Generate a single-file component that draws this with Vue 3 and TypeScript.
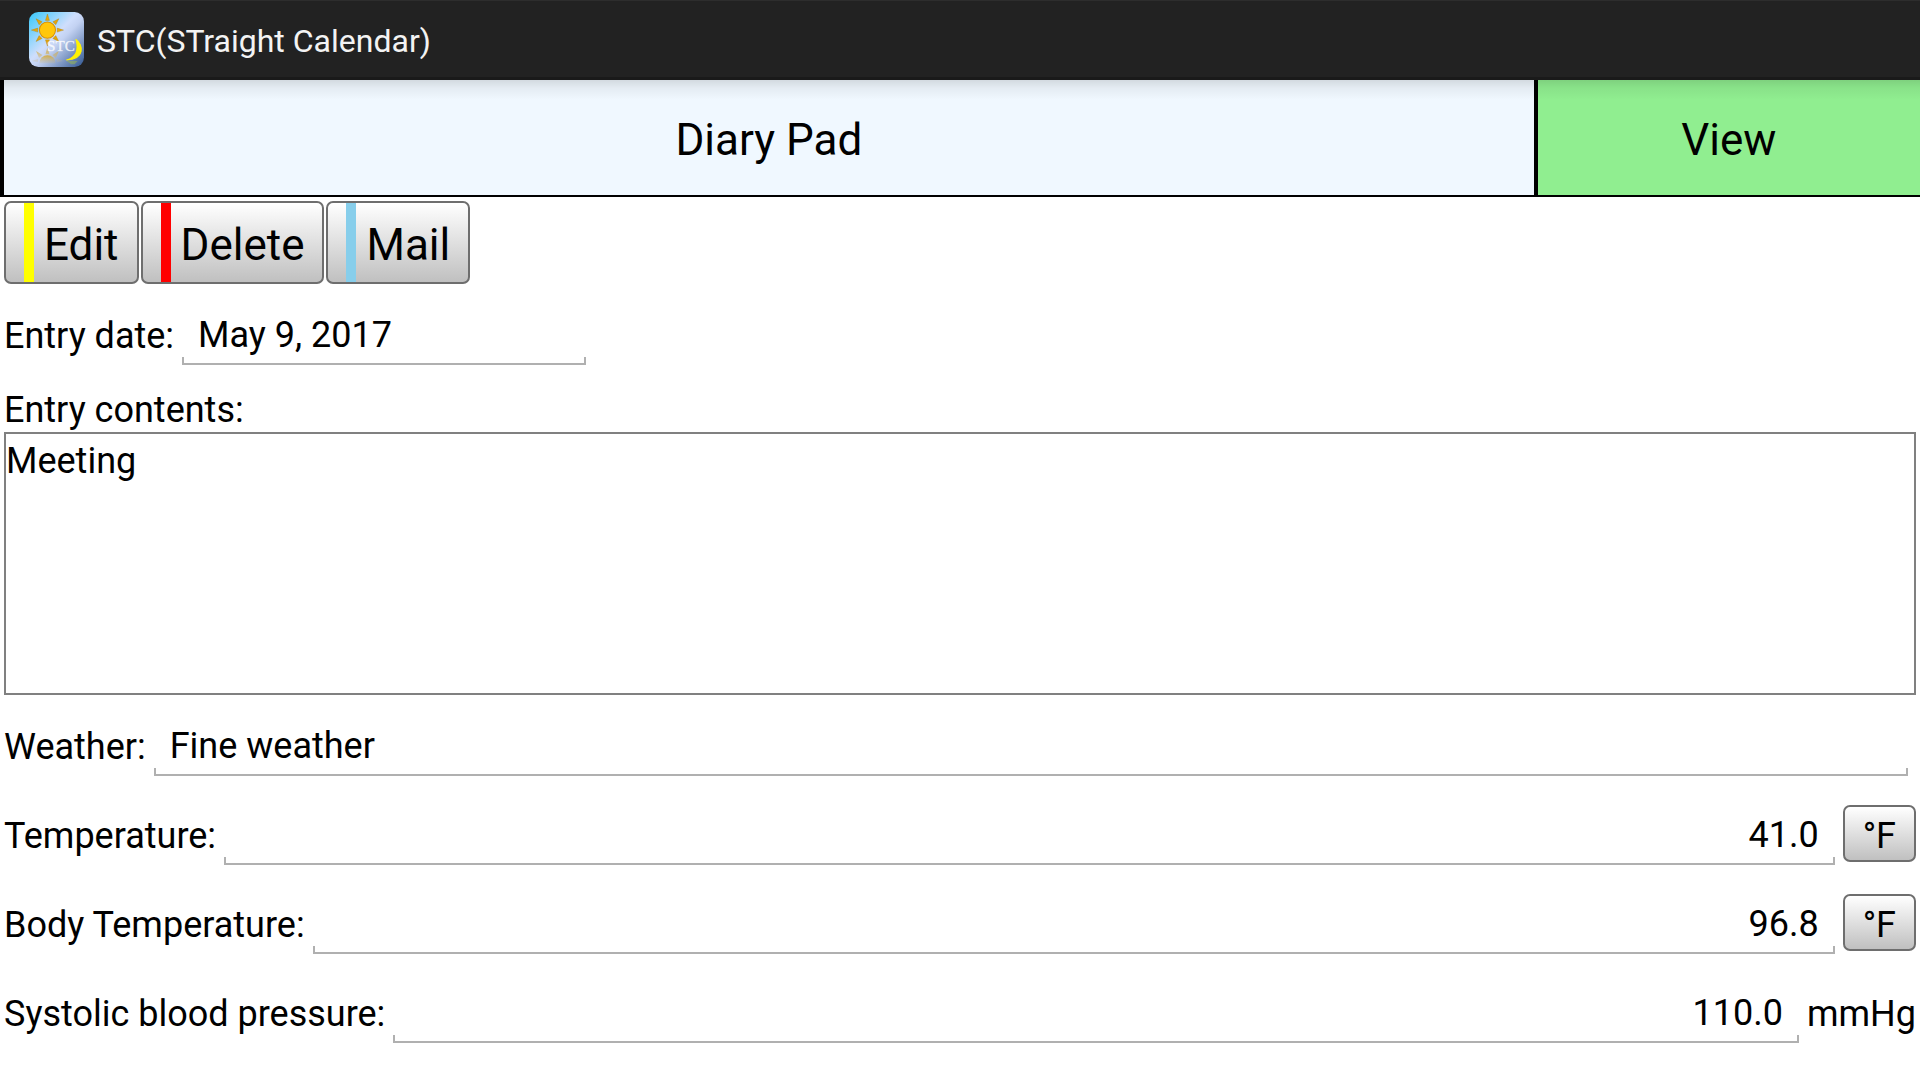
<script setup lang="ts">
import { ref } from 'vue'

interface Action {
  label: string
  color: string
}

interface Reading {
  id: string
  label: string
  value: string
  unit: string
  switchable: boolean
}

const actions: Action[] = [
  { label: 'Edit', color: '#ffff00' },
  { label: 'Delete', color: '#ff0000' },
  { label: 'Mail', color: '#87ceeb' },
]

const entryDate = ref('May 9, 2017')
const contents = ref('Meeting')
const weather = ref('Fine weather')

const readings = ref<Reading[]>([
  { id: 'temperature', label: 'Temperature:', value: '41.0', unit: '°F', switchable: true },
  { id: 'body-temperature', label: 'Body Temperature:', value: '96.8', unit: '°F', switchable: true },
  { id: 'systolic', label: 'Systolic blood pressure:', value: '110.0', unit: 'mmHg', switchable: false },
])

const rayAngles = [0, 45, 90, 135, 180, 225, 270, 315]
</script>

<template>
  <div class="app">
    <header class="app-bar">
      <svg class="app-icon" viewBox="0 0 164 164" aria-hidden="true">
        <defs>
          <linearGradient id="sky" x1="0" y1="0" x2="1" y2="1">
            <stop offset="0" stop-color="#35c8fb" />
            <stop offset="0.45" stop-color="#cfdefc" />
            <stop offset="0.55" stop-color="#c3d2f2" />
            <stop offset="1" stop-color="#2f5590" />
          </linearGradient>
          <linearGradient id="fade" x1="0" y1="0" x2="0" y2="1">
            <stop offset="0" stop-color="#d9a520" stop-opacity="0.85" />
            <stop offset="1" stop-color="#c9b98a" stop-opacity="0.2" />
          </linearGradient>
          <clipPath id="tile"><rect width="164" height="164" rx="28" /></clipPath>
        </defs>
        <g clip-path="url(#tile)">
          <rect width="164" height="164" fill="url(#sky)" />
          <g fill="url(#fade)">
            <path d="M55 106 L61 126 H49Z M21 116 L40 128 L30 137Z M89 116 L70 128 L80 137Z M8 146 L27 140 V150Z M102 146 L83 140 V150Z" />
            <path d="M31 153 A24 24 0 0 1 79 153Z" />
          </g>
          <g fill="#e3a60c" stroke="#a87808" stroke-width="1">
            <path v-for="a in rayAngles" :key="a" d="M55 6 L61 25 H49Z" :transform="`rotate(${a} 55 54)`" />
          </g>
          <circle cx="55" cy="54" r="24" fill="#ffc70a" stroke="#d98e00" stroke-width="3" />
          <text x="54" y="116" class="icon-text">STC</text>
          <path d="M140 82 C164 98 166 142 112 143 C142 134 148 110 140 82Z" fill="#fff200" stroke="#fff200" stroke-width="3" stroke-linejoin="round" />
          <path d="M112 146 H145 L136 156 H126Z" fill="#8fae5e" opacity="0.65" />
        </g>
      </svg>
      <span class="app-title">STC(STraight Calendar)</span>
    </header>

    <div class="title-row">
      <h1 class="page-title">Diary Pad</h1>
      <button type="button" class="mode">View</button>
    </div>

    <main class="page">
      <div class="actions">
        <button v-for="a in actions" :key="a.label" type="button" class="btn action">
          <span class="stripe" :style="{ backgroundColor: a.color }"></span>
          <span class="action-label">{{ a.label }}</span>
        </button>
      </div>

      <form class="entry" @submit.prevent>
        <div class="row">
          <label for="entry-date" class="label">Entry date:</label>
          <input id="entry-date" v-model="entryDate" type="text" class="field date" />
        </div>

        <div class="contents">
          <label for="contents" class="contents-label">Entry contents:</label>
          <textarea id="contents" v-model="contents" class="memo" spellcheck="false"></textarea>
        </div>

        <div class="row weather">
          <label for="weather" class="label">Weather:</label>
          <input id="weather" v-model="weather" type="text" class="field" />
        </div>

        <div v-for="r in readings" :key="r.id" class="row">
          <label :for="r.id" class="label">{{ r.label }}</label>
          <input :id="r.id" v-model="r.value" type="text" inputmode="decimal" class="field number" />
          <button v-if="r.switchable" type="button" class="btn unit-btn">{{ r.unit }}</button>
          <span v-else class="label">{{ r.unit }}</span>
        </div>
      </form>
    </main>
  </div>
</template>

<style>
body {
  background: #fff;
}
</style>

<style scoped>
.app,
.app * {
  box-sizing: border-box;
}

.app {
  font-family: Roboto, 'Liberation Sans', sans-serif;
  font-size: 36px;
  line-height: 42px;
  color: #000;
}

button,
input,
textarea {
  margin: 0;
  font: inherit;
  color: inherit;
}

.app-bar {
  display: flex;
  align-items: center;
  gap: 13px;
  height: 80px;
  padding: 0 29px;
  background: #222;
  border-top: 1px solid #2d2d2d;
  border-bottom: 3px solid #1a1a1a;
}

.app-icon {
  width: 55px;
  height: 55px;
}

.icon-text {
  font-family: 'Liberation Serif', serif;
  font-size: 45px;
  fill: #fff;
  fill-opacity: 0.8;
  stroke: #fff;
  stroke-width: 2px;
  stroke-opacity: 0.4;
}

.app-title {
  padding-top: 4px;
  font-size: 32px;
  line-height: 38px;
  color: #f3f3f3;
}

.title-row {
  display: grid;
  grid-template-columns: 4fr 1fr;
  gap: 4px;
  padding: 0 0 2px 4px;
  background: #000;
  font-size: 44px;
  line-height: 53px;
  text-align: center;
}

.page-title,
.mode {
  margin: 0;
  padding: 34px 0 28px;
  border: 0;
  border-radius: 0;
  font-size: inherit;
  font-weight: 400;
  background-image: linear-gradient(rgba(0, 0, 0, 0.12), rgba(0, 0, 0, 0.05) 8px, transparent 20px);
}

.page-title {
  background-color: #f0f8ff;
}

.mode {
  background-color: #90ee90;
}

.page {
  padding: 4px 4px 37px;
}

.actions {
  display: flex;
  gap: 2px;
}

.btn {
  border: 2px solid #6e6e6e;
  border-radius: 7px;
  background: linear-gradient(#fff, #c0c0c0);
}

.action {
  display: flex;
  gap: 10px;
  height: 83px;
  padding: 0 18px;
  font-size: 44px;
  line-height: 53px;
}

.stripe {
  width: 10px;
  align-self: stretch;
}

.action-label {
  align-self: center;
  padding-top: 6px;
}

.entry {
  display: flex;
  flex-direction: column;
  gap: 29px;
  padding-top: 21px;
}

.row {
  display: flex;
  align-items: flex-end;
  gap: 8px;
  height: 60px;
}

.label {
  flex: none;
  padding-bottom: 8px;
}

.field {
  flex: 1;
  min-width: 0;
  height: 56px;
  padding: 5px 16px 9px;
  border: 0;
  outline: 0;
  background:
    linear-gradient(#b0b0b0, #b0b0b0) left bottom / 2px 8px no-repeat,
    linear-gradient(#b0b0b0, #b0b0b0) right bottom / 2px 8px no-repeat,
    linear-gradient(#b0b0b0, #b0b0b0) left bottom / 100% 2px no-repeat;
}

.date {
  flex: 0 1 404px;
}

.weather {
  padding-right: 8px;
}

.number {
  text-align: right;
}

.contents {
  display: flex;
  flex-direction: column;
  margin: -5px 0 -8px;
}

.memo {
  height: 263px;
  margin-top: 1px;
  padding: 6px 0;
  border: 2px solid #808080;
  outline: 0;
  resize: none;
  background: #fff;
}

.unit-btn {
  align-self: flex-start;
  height: 57px;
  padding: 4px 18px 0;
}
</style>
